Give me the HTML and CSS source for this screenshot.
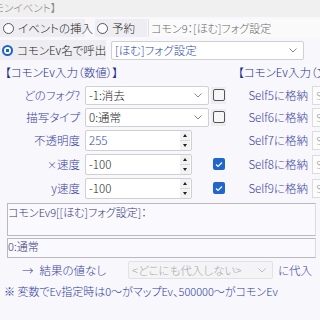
FILE: index.html
```html
<!DOCTYPE html>
<html>

<head>
    <meta charset="UTF-8">
    <title>コモンイベント</title>
    <link rel="stylesheet" href="styles.css">
</head>

<body>
    <div class="page">
        <!-- タイトル -->
        <div class="titlebar"><span class="title">モンイベント】</span></div>

        <!-- 呼出方法 -->
        <div class="row top">
            <div class="opt w-insert"><span class="radio"></span>イベントの挿入</div>
            <div class="opt w-reserve"><span class="radio"></span>予約</div>
            <div class="info">コモン9：[ほむ]フォグ設定</div>
        </div>
        <div class="row call">
            <div class="opt w-call"><span class="radio on"></span>コモンEv名で呼出</div>
            <div class="select wide">
                <span class="val blue">[ほむ]フォグ設定</span>
                <svg class="chev" width="8" height="5" viewBox="0 0 8 5"><polyline points="0.5,0.5 4,4 7.5,0.5" /></svg>
            </div>
        </div>

        <!-- 入力 -->
        <div class="heads">
            <span class="head">【コモンEv入力（数値）】</span>
            <span class="head">【コモンEv入力（文字列）】</span>
        </div>

        <div class="grid">
            <div class="lbl">どのフォグ?</div>
            <div class="select"><span class="val">-1:消去</span><svg class="chev" width="8" height="5" viewBox="0 0 8 5"><polyline points="0.5,0.5 4,4 7.5,0.5" /></svg></div>
            <div class="chk-cell"><span class="chk"></span></div>
            <div class="slbl">Self5に格納</div>
            <div class="sbox">Self5</div>

            <div class="lbl">描写タイプ</div>
            <div class="select"><span class="val">0:通常</span><svg class="chev" width="8" height="5" viewBox="0 0 8 5"><polyline points="0.5,0.5 4,4 7.5,0.5" /></svg></div>
            <div class="chk-cell"><span class="chk"></span></div>
            <div class="slbl">Self6に格納</div>
            <div class="sbox">Self6</div>

            <div class="lbl">不透明度</div>
            <div class="spin"><span class="val blue">255</span><span class="btns"><span class="up"></span><span class="dn"></span></span></div>
            <div class="chk-cell"></div>
            <div class="slbl">Self7に格納</div>
            <div class="sbox">Self7</div>

            <div class="lbl"><span class="small">×</span>速度</div>
            <div class="spin"><span class="val">-100</span><span class="btns"><span class="up"></span><span class="dn"></span></span></div>
            <div class="chk-cell"><span class="chk on"><svg width="8" height="7" viewBox="0 0 8 7"><polyline points="1,3.5 3,5.5 7,1.5" /></svg></span></div>
            <div class="slbl">Self8に格納</div>
            <div class="sbox">Self8</div>

            <div class="lbl">y速度</div>
            <div class="spin"><span class="val">-100</span><span class="btns"><span class="up"></span><span class="dn"></span></span></div>
            <div class="chk-cell"><span class="chk on"><svg width="8" height="7" viewBox="0 0 8 7"><polyline points="1,3.5 3,5.5 7,1.5" /></svg></span></div>
            <div class="slbl">Self9に格納</div>
            <div class="sbox">Self9</div>
        </div>

        <!-- 説明 -->
        <div class="memo">コモンEv9[[ほむ]フォグ設定]：</div>
        <div class="memo short">0:通常</div>

        <!-- 結果 -->
        <div class="result">
            <div class="res-lbl"><span class="arrow">→</span>結果の値なし</div>
            <div class="select off"><span class="val">&lt;どこにも代入しない&gt;</span><svg class="chev" width="8" height="5" viewBox="0 0 8 5"><polyline points="0.5,0.5 4,4 7.5,0.5" /></svg></div>
            <div class="res-to">に代入</div>
        </div>

        <div class="note">※ 変数でEv指定時は0～がマップEv、500000～がコモンEv</div>
    </div>
</body>

</html>
```

FILE: styles.css
```css
body {
    margin: 0;
    padding: 0;
    background-color: #f7f7fc;
    font-family: "Noto Sans CJK JP", "Noto Sans", sans-serif;
    font-feature-settings: "palt";
    font-weight: 300;
    font-size: 11px;
    color: #1c1c1c;
}

.page {
    width: 320px;
    height: 320px;
    overflow: hidden;
    white-space: nowrap;
}

.titlebar {
    height: 17px;
    background-color: #f0f0f0;
    line-height: 16px;
    font-size: 10.5px;
    color: #8a8a8a;
}

.title {
    margin-left: -6px;
}

.row {
    display: flex;
    align-items: center;
}

.row.top {
    margin-top: 2px;
    height: 18px;
}

.row.call {
    margin-top: 3px;
    height: 20px;
}

.opt {
    display: flex;
    align-items: center;
    height: 100%;
    background-color: #eeeef2;
    padding-left: 3px;
    box-sizing: border-box;
    font-size: 11.5px;
}

.w-insert {
    width: 85px;
}

.w-reserve {
    width: 52px;
    margin-left: 10px;
    padding-left: 2px;
}

.w-call {
    width: 106px;
    padding-left: 2px;
}

.radio {
    width: 9px;
    height: 9px;
    border: 1px solid #555;
    border-radius: 50%;
    margin-right: 4px;
    background-color: #fdfdfd;
    flex: none;
}

.radio.on {
    width: 7px;
    height: 7px;
    border: 2px solid #1b62c9;
    background: radial-gradient(circle, #1b62c9 0 1.5px, #fff 2px);
}

.info {
    flex: 1;
    height: 100%;
    margin-left: 1px;
    padding-left: 2px;
    background-color: #fafafa;
    border-left: 1px solid #e2e2e2;
    color: #6b6b6b;
    line-height: 18px;
    font-size: 11px;
}

.select {
    display: flex;
    align-items: center;
    justify-content: space-between;
    box-sizing: border-box;
    height: 19px;
    background-color: #fff;
    border: 1px solid #cfcfd4;
    border-radius: 2px;
    padding: 0 6px 0 3px;
}

.select.wide {
    width: 193px;
    margin-left: 5px;
    height: 19px;
}

.chev {
    fill: none;
    stroke: #8a8a8a;
    stroke-width: 1;
}

.val {
    font-size: 11.5px;
}

.blue {
    color: #2e4aa6;
}

.heads {
    display: flex;
    margin-top: 5px;
    height: 14px;
    line-height: 14px;
}

.head {
    flex: none;
    color: #1f2f8f;
    font-size: 11.5px;
}

.head:first-child {
    width: 233px;
    padding-left: 5px;
}

.grid {
    display: grid;
    grid-template-columns: 85px 124px 19px 83px 1fr;
    grid-template-rows: 22px 22px 24px 24px 24px;
    align-items: center;
    margin-top: 5px;
}

.lbl {
    text-align: right;
    padding-right: 5px;
    color: #3a41a0;
    font-size: 11.5px;
}

.small {
    font-size: 10px;
}

.spin {
    display: flex;
    align-items: center;
    justify-content: space-between;
    box-sizing: border-box;
    width: 107px;
    height: 21px;
    background-color: #fff;
    border: 1px solid #cfcfd4;
    border-radius: 2px;
    padding-left: 3px;
}

.btns {
    display: flex;
    flex-direction: column;
    width: 10px;
    height: 19px;
    margin-right: 1px;
    background-color: #f2f2f2;
}

.btns span {
    flex: 1;
    display: flex;
    align-items: center;
    justify-content: center;
}

.btns .up {
    border-bottom: 1px solid #d8d8d8;
}

.btns .up::after {
    content: "";
    border-left: 2.5px solid transparent;
    border-right: 2.5px solid transparent;
    border-bottom: 3px solid #222;
}

.btns .dn::after {
    content: "";
    border-left: 2.5px solid transparent;
    border-right: 2.5px solid transparent;
    border-top: 3px solid #222;
}

.chk-cell {
    display: flex;
    justify-content: center;
    align-items: center;
    height: 17px;
    margin-left: 2px;
    width: 15px;
}

.chk-cell:has(.chk:not(.on)) {
    background-color: #ededf0;
}

.chk {
    display: flex;
    align-items: center;
    justify-content: center;
    box-sizing: border-box;
    width: 12px;
    height: 12px;
    border: 1px solid #555;
    border-radius: 2px;
    background-color: #f6f6f6;
}

.chk.on {
    border: none;
    background-color: #1f67cf;
}

.chk svg {
    fill: none;
    stroke: #fff;
    stroke-width: 1.2;
}

.slbl {
    text-align: right;
    padding-right: 3px;
    color: #3a41a0;
    font-size: 11.5px;
}

.sbox {
    box-sizing: border-box;
    height: 19px;
    margin-left: 1px;
    padding-left: 3px;
    background-color: #fcfcfc;
    border: 1px solid #dcdcdc;
    color: #9a9a9a;
    line-height: 17px;
}

.memo {
    box-sizing: border-box;
    margin: 3px 0 0 7px;
    width: 309px;
    height: 33px;
    border: 1px solid #b9b9be;
    border-right-color: #dcdce0;
    background-color: #f9f9fe;
    color: #36367a;
    font-size: 11px;
    line-height: 14px;
    padding-top: 1px;
}

.memo.short {
    margin-top: 2px;
    height: 20px;
    padding-top: 0;
}

.result {
    display: grid;
    grid-template-columns: 128px 145px auto;
    align-items: center;
    margin-top: 3px;
    height: 18px;
}

.res-lbl {
    padding-left: 22px;
    color: #3a41a0;
    font-size: 11.5px;
}

.arrow {
    margin-right: 6px;
}

.select.off {
    height: 18px;
    background-color: #f4f4f6;
    border-color: #e2e2e6;
    color: #a8a8a8;
}

.select.off .chev {
    stroke: #bdbdbd;
}

.res-to {
    padding-left: 5px;
    color: #3a41a0;
    font-size: 11.5px;
}

.note {
    margin-top: 5px;
    padding-left: 4px;
    color: #2f3c9c;
    font-size: 11px;
    line-height: 14px;
}
```
